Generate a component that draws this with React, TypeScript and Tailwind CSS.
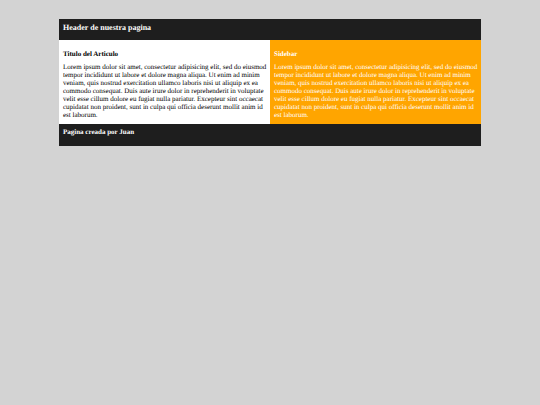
const lorem =
  "Lorem ipsum dolor sit amet, consectetur adipisicing elit, sed do eiusmod tempor incididunt ut labore et dolore magna aliqua. Ut enim ad minim veniam, quis nostrud exercitation ullamco laboris nisi ut aliquip ex ea commodo consequat. Duis aute irure dolor in reprehenderit in voluptate velit esse cillum dolore eu fugiat nulla pariatur. Excepteur sint occaecat cupidatat non proident, sunt in culpa qui officia deserunt mollit anim id est laborum.";

export default function App() {
  return (
    <div className="min-h-screen bg-[#d3d3d3] px-[59px] pt-[19px] font-['Liberation_Serif',serif] text-[7px] leading-[8px] [text-rendering:geometricPrecision]">
      <header className="bg-[#1e1e1e] px-1 pt-1 pb-2 text-white">
        <h1 className="text-[8px] leading-[9px] font-bold">Header de nuestra pagina</h1>
      </header>
      <div className="grid grid-cols-2">
        <main className="bg-white pt-[10px] pb-[5px] pl-1 text-black">
          <h2 className="mb-[5px] font-bold">Titulo del Articulo</h2>
          <p>{lorem}</p>
        </main>
        <aside className="bg-[#ffa500] pt-[10px] pb-[5px] pl-1 text-white">
          <h2 className="mb-[5px] font-bold">Sidebar</h2>
          <p>{lorem}</p>
        </aside>
      </div>
      <footer className="bg-[#1e1e1e] px-1 pt-1 pb-[10px] text-white">
        <h2 className="font-bold">Pagina creada por Juan</h2>
      </footer>
    </div>
  );
}
